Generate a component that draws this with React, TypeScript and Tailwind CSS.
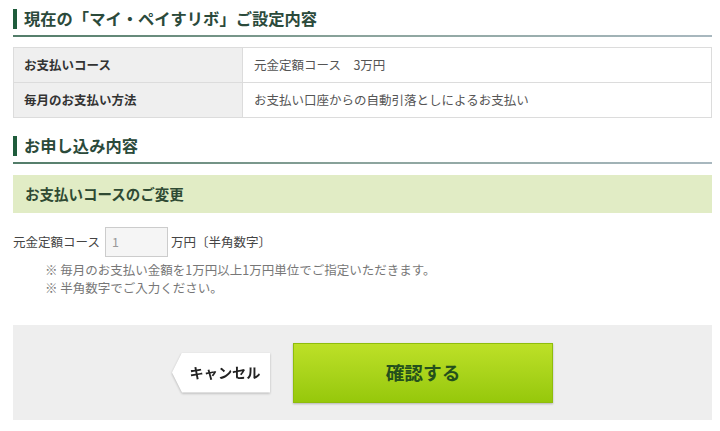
import React from "react";

const font = { fontFamily: '"Noto Sans CJK JP", "Noto Sans", sans-serif' };

function Heading({ children }: { children: React.ReactNode }) {
  return (
    <div>
      <div className="flex items-center h-[21px]">
        <div className="w-[4px] h-[20px] bg-[#1f5c3c]" />
        <div className="ml-[7px] text-[16.3px] leading-[21px] font-bold text-[#2b4a3b] tracking-[0px]">
          {children}
        </div>
      </div>
      <div className="mt-[6px] h-[2px] bg-gradient-to-r from-[#3f6e58] via-[#7f9a92] to-[#9fb0b8] opacity-90" />
    </div>
  );
}

export default function App() {
  return (
    <div
      className="w-[720px] h-[431px] bg-white pl-[13px] pr-[8px] pt-[8px] overflow-hidden"
      style={font}
    >
      <Heading>現在の「マイ・ペイすリボ」ご設定内容</Heading>

      <div className="mt-[10px] border border-[#dcdcdc] text-[12.5px]">
        <div className="flex h-[34px]">
          <div className="w-[229px] bg-[#efefef] border-r border-[#dcdcdc] flex items-center pl-[10px] font-bold text-[#333]">
            お支払いコース
          </div>
          <div className="flex-1 flex items-center pl-[11px] text-[#555]">
            元金定額コース　3万円
          </div>
        </div>
        <div className="flex h-[35px] border-t border-[#dcdcdc]">
          <div className="w-[229px] bg-[#efefef] border-r border-[#dcdcdc] flex items-center pl-[10px] font-bold text-[#333]">
            毎月のお支払い方法
          </div>
          <div className="flex-1 flex items-center pl-[11px] text-[#555]">
            お支払い口座からの自動引落としによるお支払い
          </div>
        </div>
      </div>

      <div className="mt-[17px]">
        <Heading>お申し込み内容</Heading>
      </div>

      <div className="mt-[11px] h-[38px] bg-[#e1ecc5] flex items-center pl-[12px] text-[14.5px] font-bold text-[#2f4a33]">
        お支払いコースのご変更
      </div>

      <div className="mt-[14px] flex items-center text-[12.5px] text-[#444]">
        <span>元金定額コース</span>
        <div className="ml-[5px] w-[63px] h-[30px] border border-[#cccccc] bg-[#f5f5f5] flex items-center pl-[6px] text-[#999]">
          1
        </div>
        <span className="ml-[3px]">万円〔半角数字〕</span>
      </div>

      <div className="mt-[4px] pl-[32px] text-[12.5px] leading-[18px] text-[#777]">
        <div>※ 毎月のお支払い金額を1万円以上1万円単位でご指定いただきます。</div>
        <div>※ 半角数字でご入力ください。</div>
      </div>

      <div className="mt-[28px] h-[95px] bg-[#eeeeee] flex items-center pl-[159px]">
        <div className="drop-shadow-[0_1px_1px_rgba(0,0,0,0.25)]">
          <div className="w-[98px] h-[40px] bg-white flex items-center justify-center pl-[8px] text-[14.2px] font-bold text-[#222] [clip-path:polygon(10px_0,100%_0,100%_100%,10px_100%,0_50%)]">
            キャンセル
          </div>
        </div>
        <div className="ml-[23px] w-[260px] h-[60px] bg-gradient-to-b from-[#bde027] to-[#96c80a] border border-[#8fbd0c] shadow-[0_1px_2px_rgba(0,0,0,0.25)] flex items-center justify-center text-[18.7px] font-bold text-[#24501c]">
          確認する
        </div>
      </div>
    </div>
  );
}
